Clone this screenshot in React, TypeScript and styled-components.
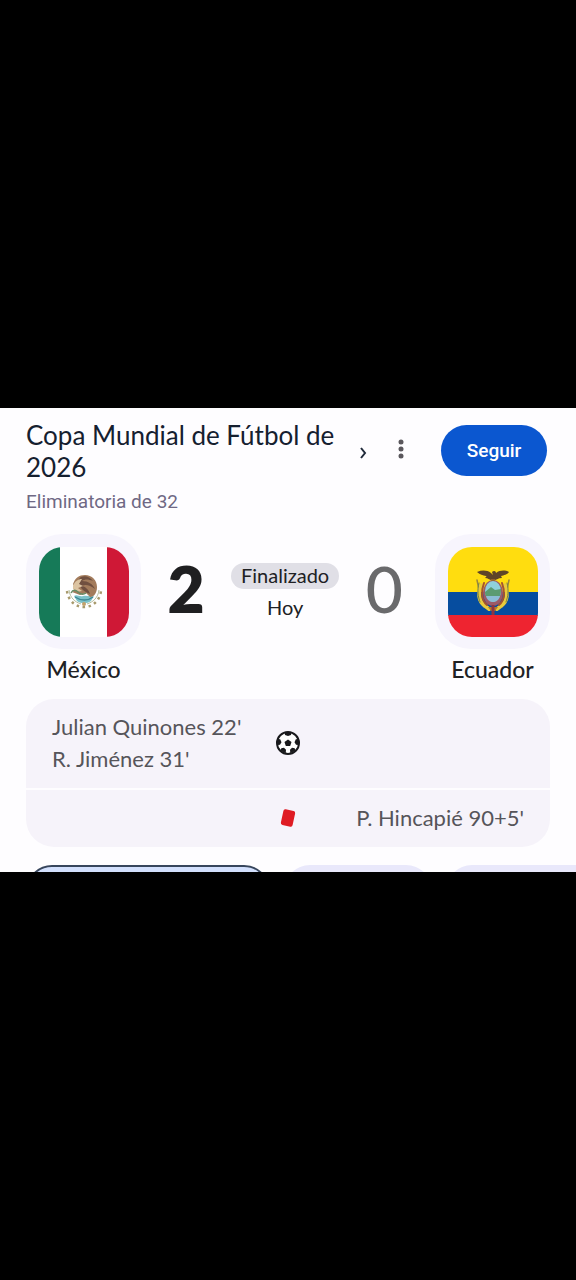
import React from "react";
import styled, { createGlobalStyle } from "styled-components";

const display = `Lato, "Open Sans", sans-serif`;
const body = `Roboto, "Liberation Sans", sans-serif`;

const GlobalStyle = createGlobalStyle`
  *, *::before, *::after { box-sizing: border-box; }
  body { margin: 0; background: #000; }
  button { font: inherit; border: 0; padding: 0; cursor: pointer; }
  h1, h2, p { margin: 0; font-weight: 400; }
`;

const Stage = styled.div`
  min-height: 100vh;
  display: flex;
  flex-direction: column;
  justify-content: center;
  background: #000;
`;

const Panel = styled.main`
  display: flex;
  flex-direction: column;
  padding: 11px 26px 0;
  background: #fefdff;
  color: #202124;
  font-family: ${display};
  overflow: hidden;
`;

const Header = styled.header`
  display: flex;
  align-items: flex-start;
`;

const Heading = styled.div`
  flex: 1;
  min-width: 0;
`;

const Title = styled.h1`
  font-size: 26px;
  line-height: 32px;
  color: #15202f;
`;

const Round = styled.p`
  margin-top: 6px;
  font-family: ${body};
  font-size: 19px;
  line-height: 26px;
  color: #6f6884;
`;

const IconButton = styled.button`
  display: flex;
  align-items: center;
  justify-content: center;
  width: 38px;
  height: 44px;
  margin-top: 8px;
  background: transparent;
  color: #202a3a;
`;

const TitleButton = styled(IconButton)`
  height: 52px;
`;

const FollowButton = styled.button`
  width: 106px;
  height: 51px;
  margin: 6px 3px 0 21px;
  border-radius: 26px;
  background: #0b57d0;
  color: #fff;
  font-family: ${body};
  font-size: 19px;
  font-weight: 500;
`;

const Match = styled.section`
  display: flex;
  gap: 20px;
  margin-top: 19px;
`;

const Team = styled.div`
  display: flex;
  flex-direction: column;
  align-items: center;
  width: 115px;

  &:last-child {
    margin-left: auto;
  }
`;

const FlagTile = styled.div`
  display: flex;
  align-items: center;
  justify-content: center;
  width: 115px;
  height: 115px;
  border-radius: 36px;
  background: #f7f5fd;
`;

const Flag = styled.svg`
  width: 90px;
  height: 90px;
  border-radius: 24px;
`;

const TeamName = styled.h2`
  margin-top: 6px;
  font-size: 23px;
  font-weight: 500;
  line-height: 28px;
`;

const Score = styled.span<{ $winner?: boolean }>`
  width: 50px;
  margin-top: 16px;
  font-size: 64px;
  line-height: 78px;
  text-align: center;
  font-weight: ${(p) => (p.$winner ? 800 : 500)};
  color: ${(p) => (p.$winner ? "#1f1f21" : "#6a6a6c")};
`;

const Status = styled.div`
  display: flex;
  flex-direction: column;
  align-items: center;
  margin-top: 29px;
  font-size: 20px;
`;

const StatusPill = styled.span`
  padding: 0 10px 2px;
  border-radius: 13px;
  background: #e0dfe6;
  line-height: 24px;
`;

const StatusDay = styled.span`
  margin-top: 5px;
  line-height: 26px;
`;

const Events = styled.section`
  display: flex;
  flex-direction: column;
  gap: 2px;
  margin-top: 16px;
  border-radius: 28px;
  overflow: hidden;
`;

const EventRow = styled.div`
  display: grid;
  grid-template-columns: 1fr 24px 1fr;
  align-items: center;
  padding: 12px 26px 13px;
  background: #f6f3fa;
  color: #56555a;
  font-size: 22px;
  line-height: 32px;
`;

const HomeEvents = styled.div`
  white-space: nowrap;
`;

const AwayEvents = styled.div`
  grid-column: 3;
  text-align: right;
  white-space: nowrap;
`;

const EventIcon = styled.svg`
  grid-column: 2;
  grid-row: 1;
  width: 24px;
  height: 24px;
`;

const Chips = styled.nav`
  display: flex;
  gap: 14px;
  height: 7px;
  margin: 18px -26px 0 0;
  overflow: hidden;
`;

const Chip = styled.button<{ $grow: number; $selected?: boolean }>`
  flex: ${(p) => p.$grow} 0 0;
  height: 52px;
  border: ${(p) => (p.$selected ? "2px solid #37455c" : "0")};
  border-radius: 26px;
  background: ${(p) => (p.$selected ? "#d3e0fd" : "#e9e8fb")};

  &:last-child {
    border-top-right-radius: 0;
  }
`;

const MexicoFlag = () => (
  <Flag viewBox="0 0 90 90" role="img">
    <rect width="90" height="90" fill="#fff" />
    <rect width="21" height="90" fill="#167a58" />
    <rect x="68" width="22" height="90" fill="#cf1836" />
    <path d="M28 44c1 9 8 16 17 16s16-7 17-16" fill="none" stroke="#a89a6c" strokeWidth="2.5" strokeDasharray="2.5 3.5" />
    <path d="M30 43c1 8 6 12 12 14M60 43c-1 8-6 12-12 14" fill="none" stroke="#b5bd9c" strokeWidth="1" />
    <path d="M35 49c3-2 5 1 9 0s7 1 11 0l-3 5c-4 3-10 3-14 0z" fill="#7cc2c9" />
    <path d="M36 50c6 4 13 4 18 0" fill="none" stroke="#3e8794" strokeWidth="1.5" />
    <path d="M34 37c2-6 6-9 12-9 7 0 12 5 12 12 0 6-3 10-7 10l-4-4-6 2-8-3c3-1 3-4 1-8z" fill="#a37c5c" />
    <path d="M42 30c4-2 9 0 12 4-5-2-8-2-11 0 6 0 11 3 13 8-5-4-10-5-13-3 4 1 7 4 8 8-5-2-8-4-10-8-2-4-2-7 1-9z" fill="#705040" />
    <path d="M34 39c2-5 5-7 9-7l-3 5 4 2-5 2 4 3c-4 1-7 0-9-2z" fill="#dcc4a2" />
    <path d="M32 46c2-4 5-3 7-1s5 3 8 1" fill="none" stroke="#668b64" strokeWidth="1.5" />
    <circle cx="45" cy="57" r="2" fill="#c2a16b" />
  </Flag>
);

const EcuadorFlag = () => (
  <Flag viewBox="0 0 90 90" role="img">
    <rect width="90" height="45" fill="#ffdd0f" />
    <rect y="45" width="90" height="24" fill="#064d9f" />
    <rect y="68" width="90" height="22" fill="#ee2430" />
    <g fill="none" strokeLinecap="round">
      <path d="M29 33l5 24M61 33l-5 24" stroke="#9a873e" strokeWidth="1.5" />
      <path d="M33 38c-3 7-3 16 4 21l4 3M57 38c3 7 3 16-4 21l-4 3" stroke="#e9cb3c" strokeWidth="4" />
      <path d="M36 36c-3 8-3 17 3 22M54 36c3 8 3 17-3 22" stroke="#a5532f" strokeWidth="2" />
      <path d="M31 36c-2 7-1 14 1 19M59 36c2 7 1 14-1 19" stroke="#72824a" strokeWidth="1" />
    </g>
    <ellipse cx="45" cy="46" rx="10" ry="13" fill="#9c5a68" />
    <ellipse cx="45" cy="44" rx="8" ry="10" fill="#8fd0dc" />
    <path d="M37 45l6-5 4 3 6-1c0 5-1 9-4 10h-8c-3-2-4-4-4-7z" fill="#5b9b70" />
    <path d="M38 49h14c-1 4-4 6-7 6s-6-2-7-6z" fill="#8cbcd4" />
    <path d="M45 34c-3-1-5-3-8-3 1-1 2-2 1-2-3-1-6-1-9-4 5-2 10-2 14 1l2 2-1-3c2-2 4-1 4 1 4-3 9-3 13-1-2 3-5 3-8 4l1 2c-4 0-6 2-9 3z" fill="#5f4528" />
    <path d="M43 33h4" stroke="#a66d2c" strokeWidth="1.5" />
    <path d="M40 60h10l-3 4h-4z" fill="#b6762e" />
    <path d="M45 58v10" stroke="#8c3543" strokeWidth="3" />
  </Flag>
);

const Ball = () => (
  <EventIcon viewBox="0 0 24 24" role="img">
    <circle cx="12" cy="12" r="11" fill="#fff" stroke="#19191c" strokeWidth="2" />
    <g fill="#19191c">
      <path d="M12 8.500l3.500 2.500-1.300 4H9.800l-1.300-4z" />
      <path d="M8.500 1.500h7l-.5 2.500-3 1-3-1z" />
      <path d="M1.500 8l2.700.2 1.300 3-1.500 2.600-2.500.2z" />
      <path d="M22.500 8l-2.700.2-1.300 3 1.500 2.600 2.500.2z" />
      <path d="M4.500 19.500l.8-2.300 2.700-.4 2 2-.3 3.400z" />
      <path d="M19.500 19.500l-.8-2.300-2.700-.4-2 2 .3 3.400z" />
    </g>
  </EventIcon>
);

const RedCard = () => (
  <EventIcon viewBox="0 0 24 24" role="img">
    <rect x="6" y="4" width="12" height="16" rx="2" fill="#df1b23" transform="rotate(12 12 12)" />
  </EventIcon>
);

export default function App() {
  return (
    <Stage>
      <GlobalStyle />
      <Panel>
        <Header>
          <Heading>
            <Title>Copa Mundial de Fútbol de 2026</Title>
            <Round>Eliminatoria de 32</Round>
          </Heading>
          <TitleButton type="button">
            <svg width="8" height="12" viewBox="0 0 8 12" fill="none" stroke="currentColor" strokeWidth="2">
              <path d="M2 1l4 5-4 5" />
            </svg>
          </TitleButton>
          <IconButton type="button">
            <svg width="6" height="20" viewBox="0 0 6 20" fill="#5a575c">
              <circle cx="3" cy="3" r="2.500" />
              <circle cx="3" cy="10" r="2.500" />
              <circle cx="3" cy="17" r="2.500" />
            </svg>
          </IconButton>
          <FollowButton type="button">Seguir</FollowButton>
        </Header>

        <Match>
          <Team>
            <FlagTile>
              <MexicoFlag />
            </FlagTile>
            <TeamName>México</TeamName>
          </Team>
          <Score $winner>2</Score>
          <Status>
            <StatusPill>Finalizado</StatusPill>
            <StatusDay>Hoy</StatusDay>
          </Status>
          <Score>0</Score>
          <Team>
            <FlagTile>
              <EcuadorFlag />
            </FlagTile>
            <TeamName>Ecuador</TeamName>
          </Team>
        </Match>

        <Events>
          <EventRow>
            <HomeEvents>
              <p>Julian Quinones 22'</p>
              <p>R. Jiménez 31'</p>
            </HomeEvents>
            <Ball />
          </EventRow>
          <EventRow>
            <RedCard />
            <AwayEvents>P. Hincapié 90+5'</AwayEvents>
          </EventRow>
        </Events>

        <Chips>
          <Chip type="button" $grow={242} $selected />
          <Chip type="button" $grow={149} />
          <Chip type="button" $grow={131} />
        </Chips>
      </Panel>
    </Stage>
  );
}
